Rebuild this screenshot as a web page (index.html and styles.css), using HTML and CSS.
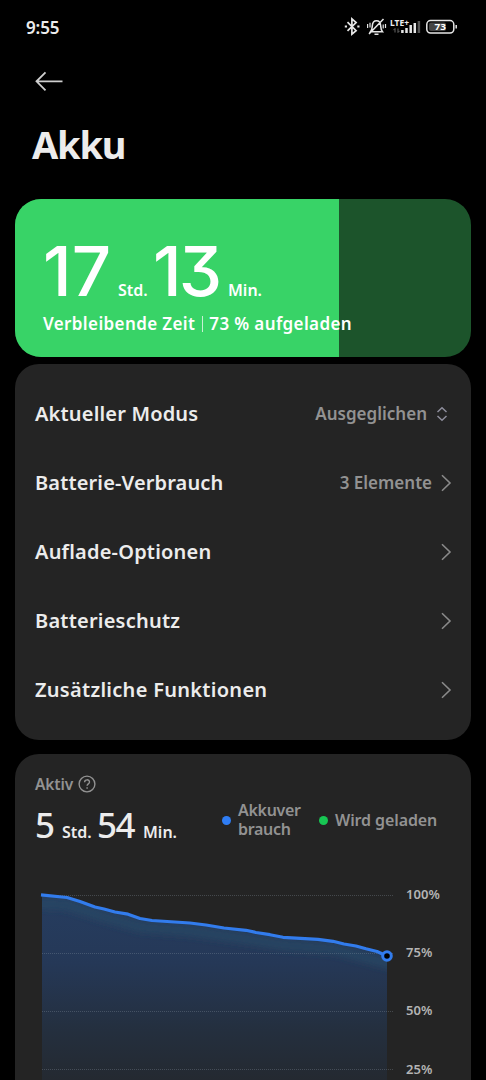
FILE: index.html
```html
<!DOCTYPE html>
<html lang="de">
<head>
<meta charset="utf-8">
<title>Akku</title>
<link rel="stylesheet" href="styles.css">
</head>
<body>
<header class="status">
  <span class="clock">9:55</span>
  <svg class="status-icons" width="118" height="24" viewBox="342 15 118 24" fill="none" stroke="#e6e6e6" stroke-width="1.7">
    <path d="M347.500 22.200l8.600 8.400-4.200 3.600V18.900l4.200 3.600-8.600 8.400"/>
    <path d="M344.800 26.500h2.200M357.300 26.500h2.200" stroke-width="2.200"/>
    <path d="M370.500 31.800h12c-1.700-2-1.600-3.500-1.800-6-.2-3-1.800-5-4.200-5s-4 2-4.200 5c-.2 2.500-.1 4-1.800 6zM374.500 34.300h4M369 34l14.500-15" stroke-width="1.500"/>
    <path d="M367.600 24v4M370 22.800v4.700M383.200 24.500v4M385.500 24v4" stroke-width="1.200"/>
    <text class="network" x="390" y="25.500" textLength="19" lengthAdjust="spacingAndGlyphs">LTE+</text>
    <path d="M395 32.500v-4l-1.600 1.700M398 28.500v4l1.600-1.700" stroke="#666" stroke-width="1"/>
    <path d="M402.400 33v-3M406.500 33v-5M410.700 33v-8M414.800 33V23" stroke-width="2.500"/>
    <path d="M418.900 33V21" stroke="#555" stroke-width="2.500"/>
    <rect x="426.800" y="20.600" width="27" height="12.400" rx="3.800" stroke-width="1.500"/>
    <rect x="429" y="22.500" width="17" height="8.600" rx="2" fill="#444" stroke="none"/>
    <path d="M456.200 25v3.600" stroke-width="1.500"/>
    <text class="level" x="434.500" y="30.200" textLength="11.500" lengthAdjust="spacingAndGlyphs">73</text>
  </svg>
</header>
<nav class="nav">
  <svg width="30" height="22" viewBox="0 0 30 22" fill="none" stroke="#cfcfcf" stroke-width="1.800"><path d="M28.500 11.300H2.500M11.500 2.300l-9 9 9 9"/></svg>
</nav>
<h1 class="title">Akku</h1>

<section class="battery">
  <div class="charge" style="width:324px"></div>
  <div class="battery-text">
    <div class="remaining"><span class="big hours">17</span><span class="unit unit-h">Std.</span><span class="big minutes">13</span><span class="unit">Min.</span></div>
    <div class="caption"><span>Verbleibende Zeit</span><i class="bar"></i><span>73 % aufgeladen</span></div>
  </div>
</section>

<section class="card menu">
  <div class="row"><span class="label l1">Aktueller Modus</span><span class="value">Ausgeglichen</span>
    <svg class="updown" width="12" height="16" viewBox="0 0 12 16" fill="none" stroke="#8e8e9c" stroke-width="1.500"><path d="M1.500 6L6 1.800 10.500 6M1.500 10L6 14.200 10.500 10"/></svg></div>
  <div class="row"><span class="label l2">Batterie-Verbrauch</span><span class="value">3 Elemente</span>
    <svg class="chev" width="11" height="18" viewBox="0 0 11 18"><path d="M1 1.200L9 9l-8 7.800"/></svg></div>
  <div class="row"><span class="label l3">Auflade-Optionen</span>
    <svg class="chev" width="11" height="18" viewBox="0 0 11 18"><path d="M1 1.200L9 9l-8 7.800"/></svg></div>
  <div class="row"><span class="label l4">Batterieschutz</span>
    <svg class="chev" width="11" height="18" viewBox="0 0 11 18"><path d="M1 1.200L9 9l-8 7.800"/></svg></div>
  <div class="row"><span class="label l5">Zusätzliche Funktionen</span>
    <svg class="chev" width="11" height="18" viewBox="0 0 11 18"><path d="M1 1.200L9 9l-8 7.800"/></svg></div>
</section>

<section class="card usage">
  <div class="summary">
    <div class="active">
      <div class="active-head"><span>Aktiv</span>
        <svg width="18" height="18" viewBox="0 0 18 18" fill="none" stroke="#929292" stroke-width="1.400"><circle cx="9" cy="9" r="7.900"/><path d="M6.600 7.300c0-3.300 4.900-3.200 4.900-.3 0 1.900-2.400 1.900-2.400 3.700M9.100 12.300v1.500"/></svg></div>
      <div class="active-time"><span class="mid m1">5</span><span class="unit u1">Std.</span><span class="mid m2">54</span><span class="unit">Min.</span></div>
    </div>
    <div class="legend">
      <i class="dot blue"></i><span class="legend-use">Akkuver<br>brauch</span>
      <i class="dot green"></i><span class="legend-charge">Wird geladen</span>
    </div>
  </div>
  <div class="chart">
    <svg class="plot" width="380" height="200" viewBox="20 880 380 200" fill="none">
      <defs>
        <linearGradient id="area" x1="0" y1="895" x2="0" y2="1090" gradientUnits="userSpaceOnUse">
          <stop offset="0" stop-color="#263d60"/><stop offset=".35" stop-color="#253857"/><stop offset=".7" stop-color="#242f3e"/><stop offset="1" stop-color="#24282e"/>
        </linearGradient>
        <clipPath id="under"><path d="M42 895L67 897.500 80 901.500 95 907 104 909 115 912 128 914.200 140 918.500 152 920.500 190 923 206 925 224 928 246 930.300 256 932.500 270 934.700 283 937.300 318 939.300 333 941.300 344 944 356 946 366 948.800 377 951.500 387 956V1080H42z"/></clipPath>
        <filter id="soft" x="-10%" y="-50%" width="120%" height="200%"><feGaussianBlur stdDeviation="3.500"/></filter>
      </defs>
      <g clip-path="url(#under)">
        <path fill="url(#area)" d="M42 890H387V1080H42z"/>
        <path filter="url(#soft)" stroke="#264a66" stroke-opacity=".75" stroke-width="9" d="M30 903L67 905 104 917 140 927 190 931 246 939 283 945 333 949 400 967"/>
      </g>
      <path stroke="#92a0ac" stroke-opacity=".3" stroke-dasharray="1 1" d="M42 895.500H394M42 953.500H394M42 1011.500H394M42 1069.500H394"/>
      <path stroke="#327ced" stroke-width="3.200" stroke-linejoin="round" d="M41 894.800L67 897.500 80 901.500 95 907 104 909 115 912 128 914.200 140 918.500 152 920.500 190 923 206 925 224 928 246 930.300 256 932.500 270 934.700 283 937.300 318 939.300 333 941.300 344 944 356 946 366 948.800 377 951.500 387 956"/>
      <circle cx="387" cy="956" r="4.300" fill="#000" stroke="#327ced" stroke-width="3"/>
    </svg>
    <div class="axis"><span>100%</span><span>75%</span><span>50%</span><span>25%</span></div>
  </div>
</section>
</body>
</html>
```
FILE: styles.css
```css
* { box-sizing: border-box; }
body {
  margin: 0;
  height: 1080px;
  overflow: hidden;
  background: #000;
  color: #ececec;
  font-family: "Noto Sans", "Open Sans", sans-serif;
  font-weight: 600;
}
svg { display: block; flex: none; }
span { white-space: nowrap; }

.status { display: flex; justify-content: space-between; align-items: center; height: 54px; padding: 0 26px; }
.clock { font-size: 17px; line-height: 24px; letter-spacing: -.1px; padding-top: 1px; }
.network { font: 700 8.5px "Noto Sans", sans-serif; fill: #eee; stroke: none; }
.level { font: 700 9.5px "Noto Sans", sans-serif; fill: #fff; stroke: none; }
.nav { height: 54px; padding: 16px 34px; }
.title { margin: 0; height: 91px; padding: 12px 0 0 32px; font-size: 38px; line-height: 48px; font-weight: 700; letter-spacing: -1.2px; }

.battery { display: grid; height: 158px; margin: 0 15px; border-radius: 26px; background: #1c542b; overflow: hidden; color: #fff; }
.charge, .battery-text { grid-area: 1 / 1; }
.charge { background: #38d367; }
.battery-text { padding: 39px 0 0 28px; }
.remaining { display: flex; align-items: baseline; height: 74px; line-height: 67px; }
.big { font-family: Inter, sans-serif; font-size: 69px; font-weight: 500; font-feature-settings: "cv09"; letter-spacing: 0; }
.hours { width: 75px; }
.minutes { width: 75px; letter-spacing: -3px; }
.unit { font-size: 16px; }
.unit-h { width: 35px; }
.caption { display: flex; align-items: center; font-size: 17px; line-height: 24px; letter-spacing: .38px; }
.bar { width: 1px; height: 16px; margin: 0 6px 0 7px; background: #c7f1d4; }

.card { margin: 0 15px; border-radius: 24px; background: #242424; }
.menu { height: 376px; margin-top: 7px; padding: 15px 19px 0 20px; }
.row { display: flex; align-items: center; height: 69.2px; }
.label { flex: 1; font-size: 20px; line-height: 28px; }
.l1 { letter-spacing: .17px; }
.l2 { letter-spacing: .14px; }
.l3 { letter-spacing: .2px; }
.l4 { letter-spacing: .22px; }
.l5 { letter-spacing: .29px; }
.value { color: #929292; font-size: 17px; }
.updown { margin: 0 4px 0 9px; }
.chev { margin-left: 9px; fill: none; stroke: #8a8a8a; stroke-width: 1.600; }

.usage { height: 350px; margin-top: 14px; padding-top: 18px; }
.summary { display: flex; height: 108px; padding-left: 20px; }
.active { flex: none; width: 187px; }
.active-head { display: flex; align-items: center; gap: 5px; height: 23px; color: #929292; font-size: 15.5px; letter-spacing: -.1px; }
.active-time { display: flex; align-items: baseline; line-height: 60px; }
.mid { font-size: 35px; font-weight: 500; letter-spacing: -1.500px; }
.m1 { width: 27px; }
.u1 { width: 35px; }
.m2 { width: 46px; }
.legend { display: flex; align-items: center; height: 96px; color: #929292; font-size: 16px; line-height: 19px; }
.legend span { flex: none; }
.dot { flex: none; width: 9px; height: 9px; border-radius: 50%; }
.blue { background: #2f7df4; }
.green { background: #17c653; }
.legend-use { width: 88px; padding-left: 7px; letter-spacing: -.3px; }
.legend-charge { margin-left: 7px; letter-spacing: -.1px; }
.chart { display: flex; padding-left: 5px; }
.axis { display: flex; flex-direction: column; gap: 38.200px; margin-left: 6px; padding-top: 4px; color: #b4b4b4; font-size: 13px; line-height: 20px; letter-spacing: .1px; }
```
